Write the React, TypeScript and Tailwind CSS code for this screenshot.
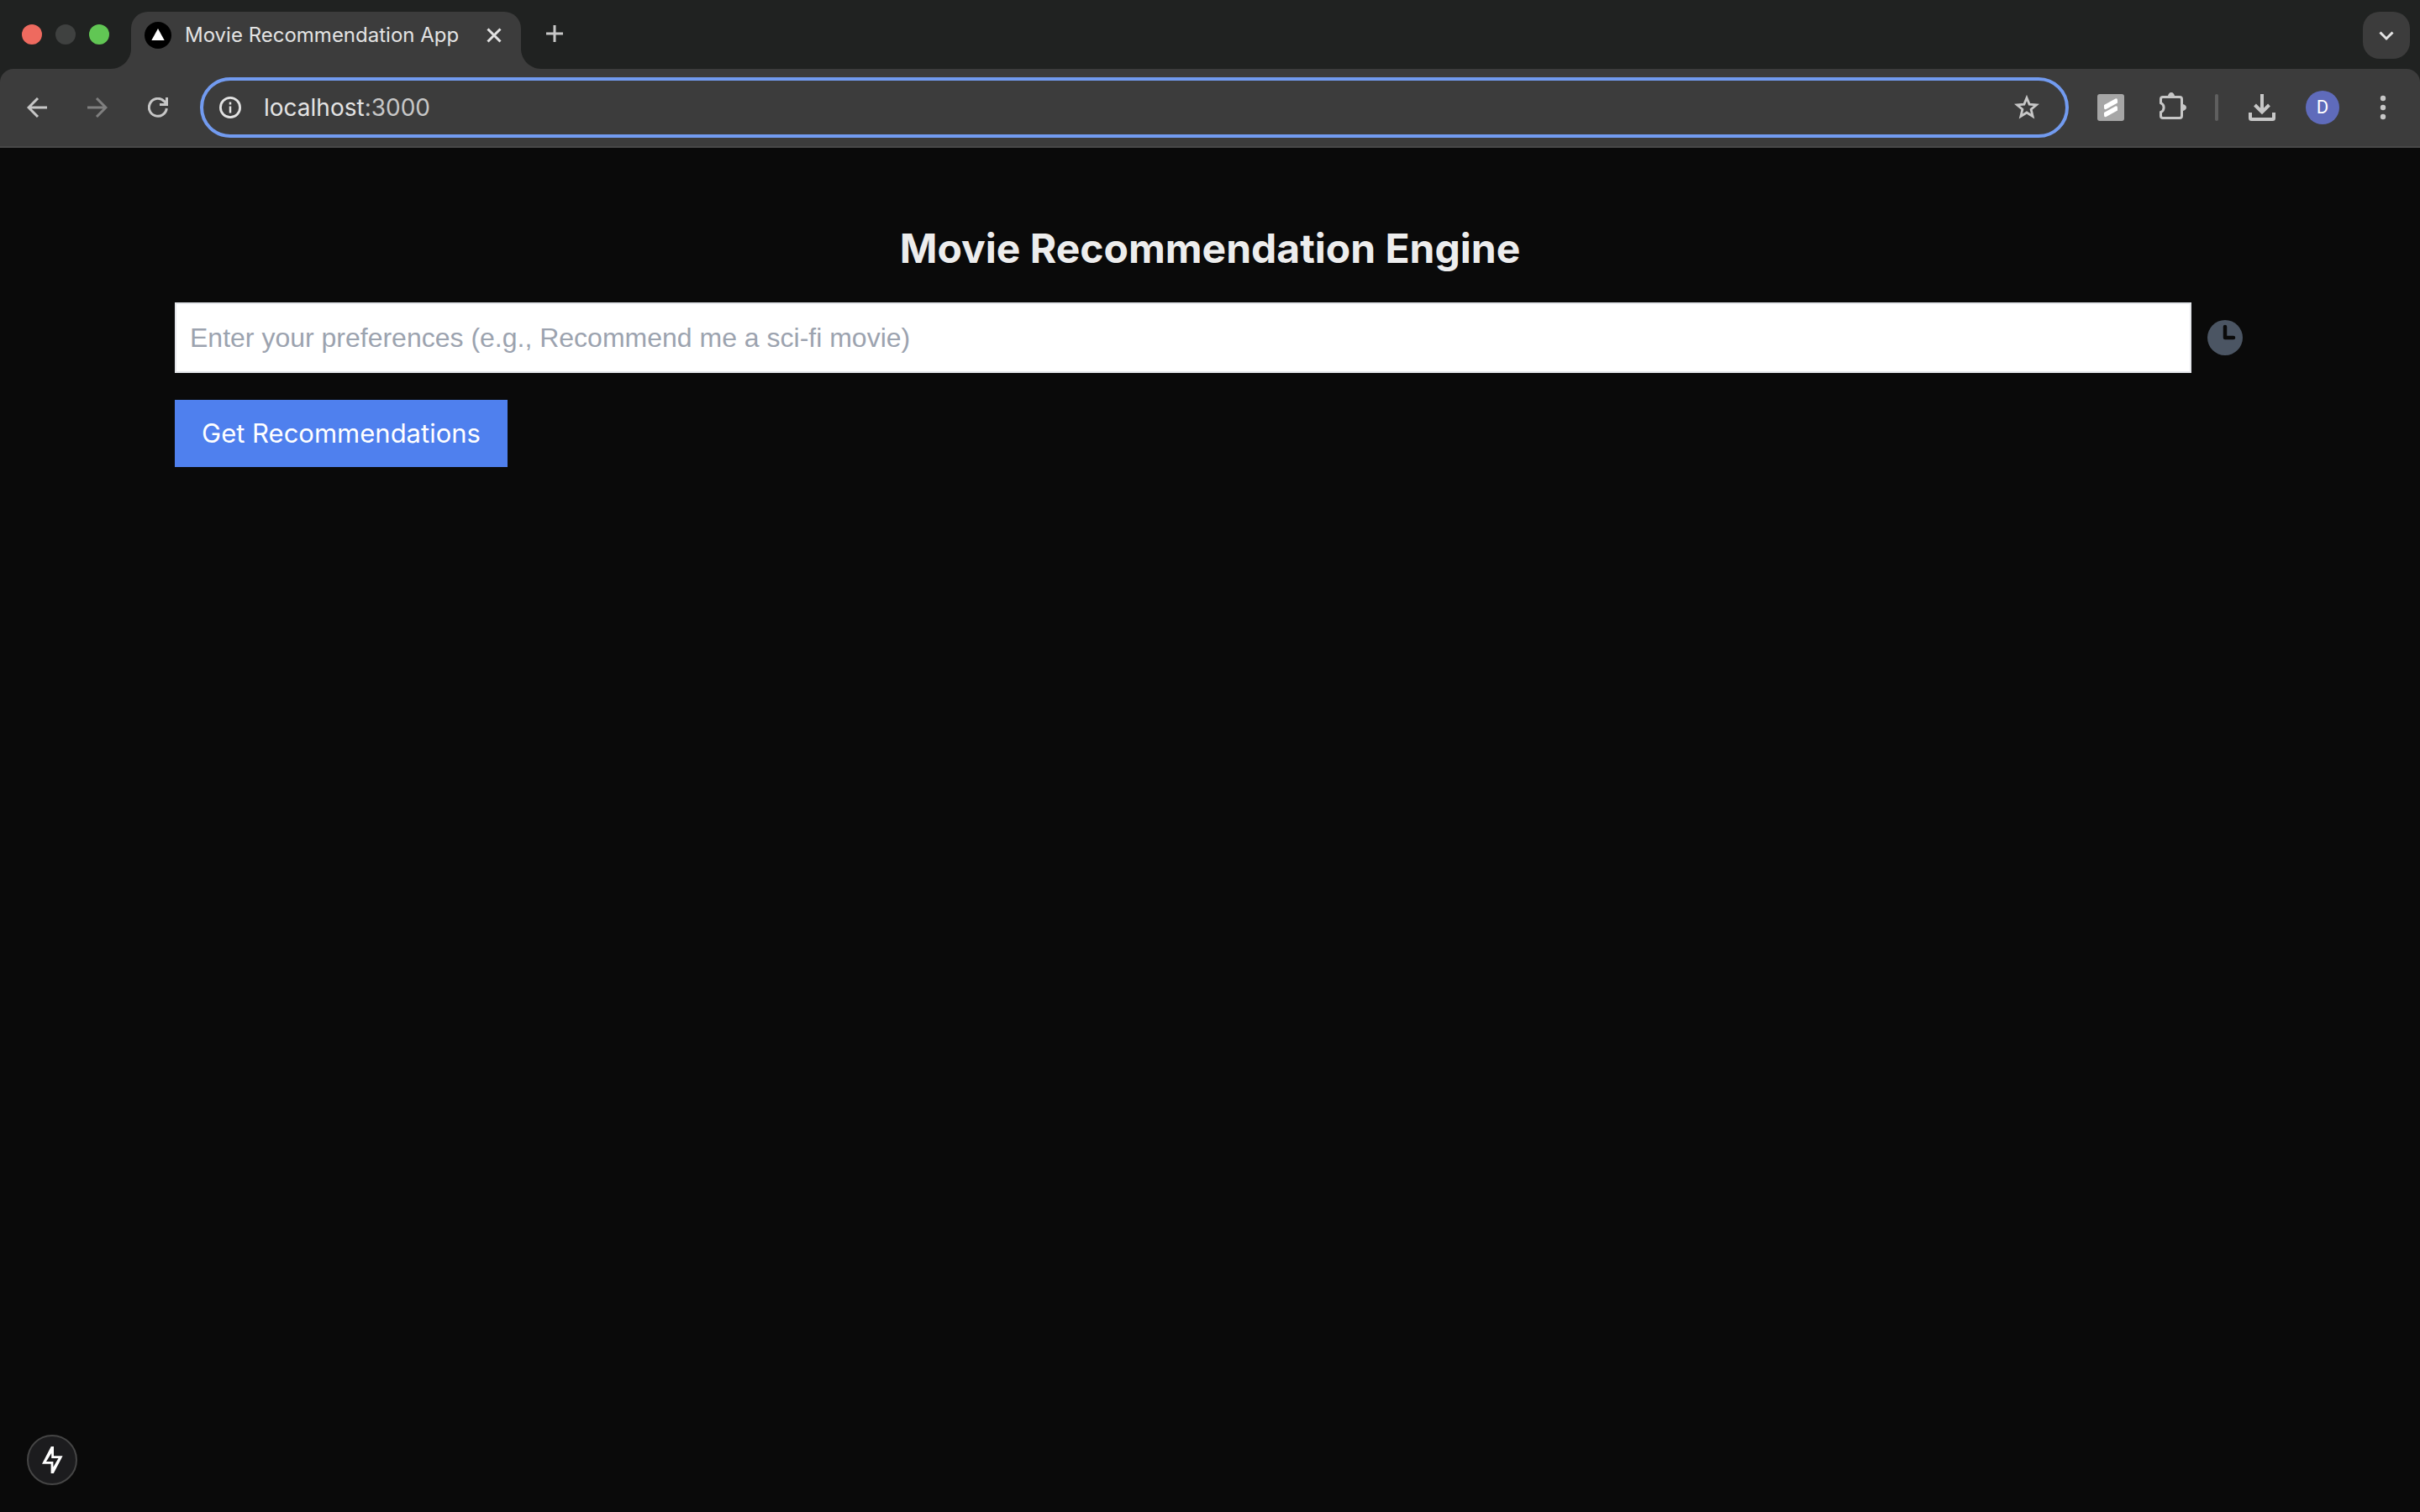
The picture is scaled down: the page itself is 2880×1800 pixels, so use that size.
import React from 'react';

function TrafficLights() {
  return (
    <div className="flex shrink-0 items-center gap-4 pl-[26px]">
      <button aria-label="Close window" className="size-6 rounded-full bg-[#ee6a5f]" />
      <button aria-label="Minimize window" className="size-6 rounded-full bg-[#3f4140]" />
      <button aria-label="Zoom window" className="size-6 rounded-full bg-[#61c654]" />
    </div>
  );
}

function TabFlare({ flip = false }: { flip?: boolean }) {
  return (
    <svg viewBox="0 0 24 24" className={flip ? 'size-6 shrink-0 -scale-x-100' : 'size-6 shrink-0'} aria-hidden="true">
      <path d="M24 0V24H0C13 24 24 13 24 0Z" fill="#3c3c3c" />
    </svg>
  );
}

function TabStrip() {
  return (
    <div className="flex h-[82px] items-end">
      <div className="flex h-full items-center">
        <TrafficLights />
      </div>
      <div className="flex items-end pl-0.5">
        <TabFlare />
        <div className="flex h-[68px] w-[464px] items-center rounded-t-[20px] bg-[#3c3c3c] pb-3 pl-4 pr-5">
          <svg viewBox="0 0 32 32" className="size-8 shrink-0" aria-hidden="true">
            <circle cx="16" cy="16" r="16" fill="#000" />
            <path d="M16 8L23.700 22H8.300Z" fill="#fff" />
          </svg>
          <span className="ml-4 flex-1 whitespace-nowrap text-[24px] leading-8 text-[#e3e3e3]">Movie Recommendation App</span>
          <button aria-label="Close tab" className="flex size-6 items-center justify-center">
            <svg viewBox="0 0 24 24" className="size-6" fill="none" stroke="#e3e3e3" strokeWidth="3">
              <path d="M4.500 4.500L19.500 19.500M19.500 4.500L4.500 19.500" />
            </svg>
          </button>
        </div>
        <TabFlare flip />
      </div>
      <button aria-label="New tab" className="mb-[30px] ml-1 flex size-6 items-center justify-center">
        <svg viewBox="0 0 24 24" className="size-6" fill="none" stroke="#c7c7c7" strokeWidth="3">
          <path d="M12 2V22M2 12H22" />
        </svg>
      </button>
      <button aria-label="Search tabs" className="mb-3 ml-auto mr-3 flex size-14 items-center justify-center rounded-[20px] bg-[#3c3c3c]">
        <svg viewBox="0 0 24 24" className="size-6" fill="none" stroke="#e3e3e3" strokeWidth="3">
          <path d="M4.500 8.500L12 16L19.500 8.500" />
        </svg>
      </button>
    </div>
  );
}

function Toolbar() {
  return (
    <div className="flex h-[94px] items-center rounded-t-2xl border-b-2 border-[#484848] bg-[#3c3c3c] pl-8 pr-7">
      <button aria-label="Back" className="size-6">
        <svg viewBox="0 0 24 24" className="size-6" fill="none" stroke="#c7c7c7" strokeWidth="3">
          <path d="M24 12H2.500M13 1L2 12L13 23" />
        </svg>
      </button>
      <button aria-label="Forward" className="ml-12 size-6">
        <svg viewBox="0 0 24 24" className="size-6" fill="none" stroke="#7f7f7f" strokeWidth="3">
          <path d="M0 12H21.500M11 1L22 12L11 23" />
        </svg>
      </button>
      <button aria-label="Reload" className="ml-12 size-6">
        <svg viewBox="0 0 24 24" className="size-6" fill="none" stroke="#c7c7c7" strokeWidth="3">
          <path d="M22.300 13A10.500 10.500 0 1 1 19.500 4.600L22 7.500" />
          <path d="M22.500 0V8.500H14" />
        </svg>
      </button>
      <label className="ml-[38px] flex h-[72px] min-w-0 flex-1 items-center rounded-full border-4 border-[#729bf0] pl-[19px] pr-[31px]">
        <svg viewBox="0 0 26 26" className="size-[26px] shrink-0" fill="none" aria-hidden="true">
          <circle cx="13" cy="13" r="11.600" stroke="#e3e3e3" strokeWidth="2.800" />
          <path d="M13 11.500V19.500M13 6.500V9.500" stroke="#e3e3e3" strokeWidth="2.500" />
        </svg>
        <span className="relative ml-[27px] flex-1 text-[28px] leading-9 text-[#e3e3e3]">
          <span aria-hidden="true">localhost<span className="text-[#c7c7c7]">:3000</span></span>
          <input aria-label="Address" defaultValue="localhost:3000" className="absolute inset-0 w-full bg-transparent text-transparent outline-none" />
        </span>
        <svg viewBox="0 0 30 30" className="size-[30px] shrink-0" fill="none" stroke="#c7c7c7" strokeWidth="2.800" aria-label="Bookmark this page">
          <path d="M15 3.500L18.100 11.100L26.500 11.800L20.100 17.200L22.100 25.500L15 21L7.900 25.500L9.900 17.200L3.500 11.800L11.900 11.100Z" />
        </svg>
      </label>
      <button aria-label="Extension" className="ml-[34px] size-8">
        <svg viewBox="0 0 32 32" className="size-8">
          <rect width="32" height="32" rx="3" fill="#a6a6a6" />
          <path d="M8 13L21.500 5.500Q24 4.500 24 7.500V10.500L10.500 18Q8 19 8 16Z" fill="#fff" />
          <path d="M8 22L21.500 14.500Q24 13.500 24 16.500V19.500L10.500 27Q8 28 8 25Z" fill="#fff" />
        </svg>
      </button>
      <button aria-label="Extensions" className="ml-[42px] size-8">
        <svg viewBox="0 2 32 32" className="size-8 overflow-visible">
          <path d="M4 5.500H24Q26.500 5.500 26.500 8V28Q26.500 30.500 24 30.500H4Q1.500 30.500 1.500 28V23.500A6 6 0 0 0 1.500 12.500V8Q1.500 5.500 4 5.500Z" fill="none" stroke="#c7c7c7" strokeWidth="3" />
          <path d="M10 5A4 5 0 0 1 18 5ZM27 14A5 4 0 0 1 27 22Z" fill="#c7c7c7" />
        </svg>
      </button>
      <div className="ml-[34px] h-8 w-1 rounded-full bg-[#5f5f5f]" />
      <button aria-label="Downloads" className="ml-9 size-8">
        <svg viewBox="0 0 32 32" className="size-8" fill="none" stroke="#c7c7c7" strokeWidth="4">
          <path d="M16 0V21M7.500 13L16 21.500L24.500 13" />
          <path d="M2 22V28.500Q2 30 3.500 30H28.500Q30 30 30 28.500V22" />
        </svg>
      </button>
      <button aria-label="Profile" className="ml-9 size-10 rounded-full bg-[#5f6bbb] font-['Roboto',sans-serif] text-[22px] leading-10 text-white">D</button>
      <button aria-label="Menu" className="ml-9 flex h-8 w-8 items-center justify-center">
        <svg viewBox="0 0 32 32" className="size-8" fill="#c7c7c7">
          <circle cx="16" cy="5" r="3.200" />
          <circle cx="16" cy="16" r="3.200" />
          <circle cx="16" cy="27" r="3.200" />
        </svg>
      </button>
    </div>
  );
}

export default function App() {
  return (
    <div className="flex min-h-screen flex-col bg-[#0a0a0a]">
      <header className="bg-[#202221] font-['Inter',sans-serif]">
        <TabStrip />
        <Toolbar />
      </header>
      <main className="mx-auto w-full max-w-[2528px] flex-1 px-8 pt-[88px] font-['Inter',sans-serif]">
        <h1 className="text-center text-[48px] font-bold leading-[64px] text-[#ededed]">Movie Recommendation Engine</h1>
        <form className="mt-8" onSubmit={(e) => e.preventDefault()}>
          <div className="flex items-center gap-4">
            <input
              aria-label="Preferences"
              placeholder="Enter your preferences (e.g., Recommend me a sci-fi movie)"
              className="h-[84px] min-w-0 flex-1 border-2 border-[#e5e7eb] bg-white px-4 font-['Liberation_Sans',sans-serif] text-[32px] text-black outline-none placeholder:text-[#9ca3af]"
            />
            <button type="button" aria-label="History" className="size-12">
              <svg viewBox="0 0 48 48" className="size-12">
                <circle cx="24" cy="24" r="21" fill="#4b5563" />
                <path d="M24 11V24H34" fill="none" stroke="#0a0a0a" strokeWidth="4.500" strokeLinecap="round" strokeLinejoin="round" />
              </svg>
            </button>
          </div>
          <button type="submit" className="mt-8 h-20 bg-[#4f80ee] px-8 text-[31px] text-white">Get Recommendations</button>
        </form>
      </main>
      <button aria-label="Route status" className="fixed bottom-8 left-8 flex size-[60px] items-center justify-center rounded-full border-2 border-[#454545] bg-[#1c1c1e]">
        <svg viewBox="0 0 24 32" className="h-8 w-6 overflow-visible" fill="#fff">
          <path fillRule="evenodd" d="M10.800 0H14V11.300H24.600L13.800 32H10.600V20.800H0ZM11.200 8V14H19.500L13.400 24.500V18H5Z" />
        </svg>
      </button>
    </div>
  );
}
